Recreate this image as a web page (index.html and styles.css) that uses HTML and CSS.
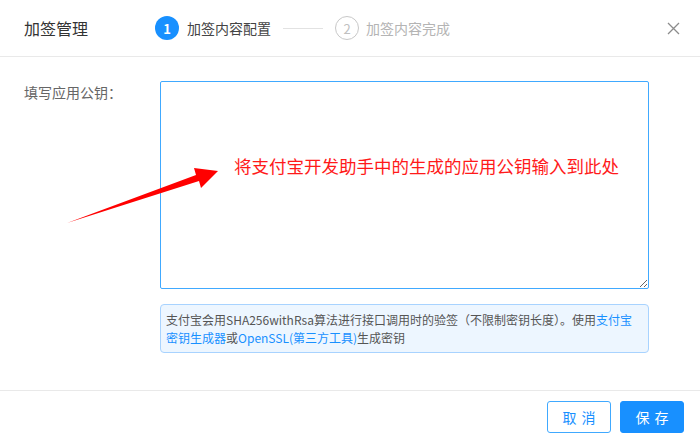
FILE: index.html
```html
<!DOCTYPE html>
<html lang="zh-CN">
<head>
<meta charset="utf-8">
<title>加签管理</title>
<link rel="stylesheet" href="styles.css">
</head>
<body>
<div class="modal">
  <header class="modal-header">
    <div class="modal-title">加签管理</div>
    <div class="steps">
      <div class="step step-active">
        <span class="step-icon">1</span>
        <span class="step-title">加签内容配置</span>
      </div>
      <span class="step-line"></span>
      <div class="step step-wait">
        <span class="step-icon">2</span>
        <span class="step-title">加签内容完成</span>
      </div>
    </div>
    <button class="modal-close" aria-label="关闭">
      <svg width="13" height="13" viewBox="0 0 13 13"><path d="M1 1 L12 12 M12 1 L1 12" stroke="#8c8c8c" stroke-width="1.3" fill="none"/></svg>
    </button>
  </header>
  <main class="modal-body">
    <div class="form-row">
      <label class="form-label">填写应用公钥：</label>
      <div class="form-control">
        <textarea class="key-input"></textarea>
        <div class="help-box">支付宝会用SHA256withRsa算法进行接口调用时的验签（不限制密钥长度）。使用<a class="link">支付宝密钥生成器</a>或<a class="link">OpenSSL(第三方工具)</a>生成密钥</div>
      </div>
    </div>
    <div class="annotation">将支付宝开发助手中的生成的应用公钥输入到此处</div>
    <svg class="arrow" width="700" height="443" viewBox="0 0 700 443">
      <polygon points="67,223 196,175 194,168 218,171 201,188 199,181" fill="#ff0000"/>
    </svg>
  </main>
  <footer class="modal-footer">
    <button class="btn btn-default">取消</button>
    <button class="btn btn-primary">保存</button>
  </footer>
</div>
</body>
</html>
```
FILE: styles.css
```css
* { box-sizing: border-box; }
html, body {
  margin: 0;
  padding: 0;
  background: #fff;
  font-family: "Noto Sans CJK SC", "Noto Sans", sans-serif;
  color: #333;
}
.modal {
  width: 700px;
  height: 443px;
  display: flex;
  flex-direction: column;
}
.modal-header {
  height: 57px;
  border-bottom: 1px solid #e9e9e9;
  display: flex;
  align-items: center;
  padding: 0 20px 0 24px;
}
.modal-title {
  font-size: 16px;
  color: #333;
  line-height: 22px;
}
.steps {
  display: flex;
  align-items: center;
  margin-left: 67px;
}
.step {
  display: flex;
  align-items: center;
}
.step-icon {
  width: 24px;
  height: 24px;
  border-radius: 50%;
  display: flex;
  align-items: center;
  justify-content: center;
  font-size: 13px;
  line-height: 1;
  margin-right: 8px;
}
.step-title {
  font-size: 14px;
  line-height: 22px;
}
.step-active .step-icon {
  background: #1890ff;
  color: #fff;
  font-weight: 600;
}
.step-active .step-title { color: #444; }
.step-wait .step-icon {
  border: 1px solid #c8c8c8;
  color: #c0c0c0;
  margin-right: 7px;
}
.step-wait .step-title { color: #b4b4b4; }
.step-line {
  width: 40px;
  height: 1px;
  background: #e2e2e2;
  margin: 0 12px;
}
.modal-close {
  margin-left: auto;
  border: 0;
  background: none;
  padding: 0;
  width: 13px;
  height: 13px;
  display: flex;
}
.modal-body {
  position: relative;
  flex: 1;
  padding: 24px 51px 0 24px;
}
.form-row {
  display: flex;
}
.form-label {
  width: 136px;
  font-size: 14px;
  line-height: 22px;
  color: #666;
}
.form-control {
  width: 489px;
  display: flex;
  flex-direction: column;
  gap: 15px;
}
.key-input {
  display: block;
  width: 489px;
  height: 208px;
  border: 1px solid #40a9ff;
  border-radius: 2px;
  resize: vertical;
  outline: none;
  margin: 0;
  font-family: inherit;
}
.help-box {
  background: #edf6ff;
  border: 1px solid #a8d3ff;
  border-radius: 4px;
  padding: 6px 5px 5px;
  font-size: 12px;
  line-height: 18px;
  color: #555;
}
.link { color: #1890ff; }
.annotation {
  position: absolute;
  left: 234px;
  top: 97px;
  font-size: 17.5px;
  line-height: 24px;
  color: #ff1a1a;
  white-space: nowrap;
}
.arrow {
  position: absolute;
  left: 0;
  top: -57px;
  pointer-events: none;
}
.modal-footer {
  border-top: 1px solid #e9e9e9;
  height: 53px;
  display: flex;
  justify-content: flex-end;
  align-items: center;
  gap: 9px;
  padding: 0 16px;
}
.btn {
  width: 64px;
  height: 32px;
  border-radius: 3px;
  font-size: 14px;
  font-family: inherit;
  letter-spacing: 5px;
  text-indent: 5px;
  padding: 0;
}
.btn-default {
  border: 1px solid #40a9ff;
  background: #fff;
  color: #1890ff;
}
.btn-primary {
  border: 1px solid #1890ff;
  background: #1890ff;
  color: #fff;
}
```
